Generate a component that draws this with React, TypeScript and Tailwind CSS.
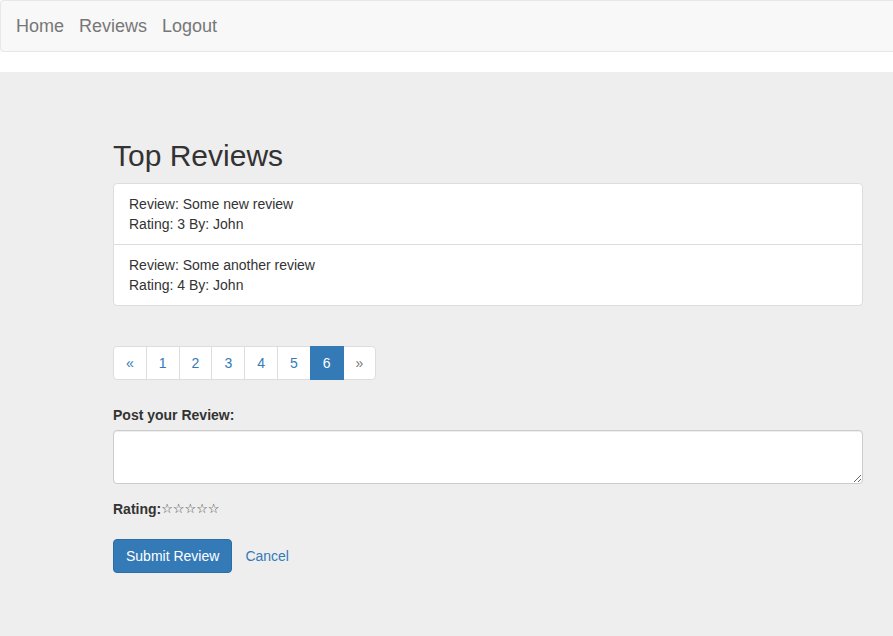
const reviews = [
  { text: 'Some new review', rating: 3, by: 'John' },
  { text: 'Some another review', rating: 4, by: 'John' },
];

const pages = ['«', '1', '2', '3', '4', '5', '6', '»'];

export default function App() {
  return (
    <div className="min-h-[636px] bg-white text-[14px] leading-5 text-[#333]" style={{ fontFamily: '"Liberation Sans", Arial, sans-serif' }}>
      <nav className="mb-5 flex h-[52px] items-center rounded-l border border-r-0 border-[#e7e7e7] bg-[#f8f8f8] pl-[15px]">
        <ul className="flex gap-[15px] text-[18px] text-[#777]">
          <li><a href="#">Home</a></li>
          <li><a href="#">Reviews</a></li>
          <li><a href="#">Logout</a></li>
        </ul>
      </nav>

      <div className="min-h-[564px] bg-[#eee] pb-12 pl-[113px] pr-[30px] pt-[67px]">
        <div className="w-[750px]">
          <h2 className="mb-[11px] text-[30px] leading-[33px] font-normal">Top Reviews</h2>

          <ul className="mb-10">
            {reviews.map((r, i) => (
              <li
                key={i}
                className={`border border-[#ddd] bg-white px-[15px] py-[10px] ${i === 0 ? 'rounded-t' : '-mt-px rounded-b'}`}
              >
                <div>Review: {r.text}</div>
                <div>Rating: {r.rating} By: {r.by}</div>
              </li>
            ))}
          </ul>

          <ul className="flex">
            {pages.map((p, i) => (
              <li key={i} className={i > 0 ? '-ml-px' : ''}>
                <a
                  href="#"
                  className={`block border px-3 py-1.5 ${
                    p === '6'
                      ? 'relative z-10 border-[#337ab7] bg-[#337ab7] text-white'
                      : p === '»'
                        ? 'border-[#ddd] bg-white text-[#777]'
                        : 'border-[#ddd] bg-white text-[#337ab7]'
                  } ${i === 0 ? 'rounded-l' : ''} ${i === pages.length - 1 ? 'rounded-r' : ''}`}
                >
                  {p}
                </a>
              </li>
            ))}
          </ul>

          <form className="mt-[25px]">
            <label className="mb-[5px] block font-bold">Post your Review:</label>
            <textarea
              rows={2}
              className="block h-[54px] w-full rounded border border-[#ccc] bg-white px-3 py-1.5 shadow-[inset_0_1px_1px_rgba(0,0,0,0.075)] outline-none"
            />
            <div className="mt-[15px] flex items-center">
              <span className="font-bold">Rating:</span>
              <span className="text-[13px] text-[#444]" style={{ fontFamily: '"DejaVu Sans", sans-serif' }}>☆☆☆☆☆</span>
            </div>
            <div className="mt-5 flex items-center gap-[13px]">
              <button type="button" className="rounded border border-[#2e6da4] bg-[#337ab7] px-3 py-1.5 text-white">
                Submit Review
              </button>
              <a href="#" className="text-[#337ab7]">Cancel</a>
            </div>
          </form>
        </div>
      </div>
    </div>
  );
}
